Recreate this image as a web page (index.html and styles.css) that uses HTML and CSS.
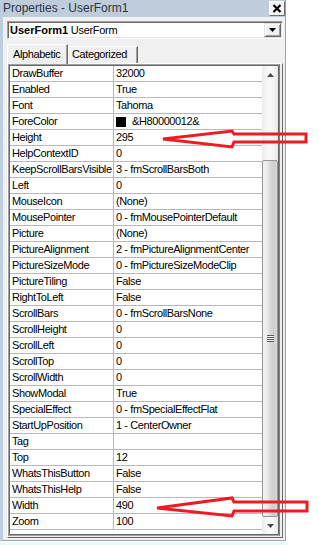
FILE: index.html
```html
<!DOCTYPE html>
<html>
<head>
<meta charset="utf-8">
<link rel="stylesheet" href="styles.css">
</head>
<body>
<div class="screen">
  <div class="window">
    <div class="titlebar">
      <span class="title">Properties - UserForm1</span>
      <span class="close"><svg width="10" height="9" viewBox="0 0 10 9"><path d="M1.5 1 L8.5 8 M8.5 1 L1.5 8" stroke="#000" stroke-width="2.2" fill="none"/></svg></span>
    </div>
    <div class="combo">
      <span class="combo-text"><b>UserForm1</b> UserForm</span>
      <span class="drop"><svg width="7" height="4" viewBox="0 0 7 4"><path d="M0 0 H7 L3.5 4 Z" fill="#000"/></svg></span>
    </div>
    <div class="tabs">
      <div class="tab active">Alphabetic</div>
      <div class="tab">Categorized</div>
    </div>
    <div class="page">
      <div class="grid">
        <div class="rows">
          <div class="row"><span class="name">DrawBuffer</span><span class="val">32000</span></div>
          <div class="row"><span class="name">Enabled</span><span class="val">True</span></div>
          <div class="row"><span class="name">Font</span><span class="val">Tahoma</span></div>
          <div class="row"><span class="name">ForeColor</span><span class="val"><span class="swatch"></span>&amp;H80000012&amp;</span></div>
          <div class="row"><span class="name">Height</span><span class="val">295</span></div>
          <div class="row"><span class="name">HelpContextID</span><span class="val">0</span></div>
          <div class="row"><span class="name">KeepScrollBarsVisible</span><span class="val">3 - fmScrollBarsBoth</span></div>
          <div class="row"><span class="name">Left</span><span class="val">0</span></div>
          <div class="row"><span class="name">MouseIcon</span><span class="val">(None)</span></div>
          <div class="row"><span class="name">MousePointer</span><span class="val">0 - fmMousePointerDefault</span></div>
          <div class="row"><span class="name">Picture</span><span class="val">(None)</span></div>
          <div class="row"><span class="name">PictureAlignment</span><span class="val">2 - fmPictureAlignmentCenter</span></div>
          <div class="row"><span class="name">PictureSizeMode</span><span class="val">0 - fmPictureSizeModeClip</span></div>
          <div class="row"><span class="name">PictureTiling</span><span class="val">False</span></div>
          <div class="row"><span class="name">RightToLeft</span><span class="val">False</span></div>
          <div class="row"><span class="name">ScrollBars</span><span class="val">0 - fmScrollBarsNone</span></div>
          <div class="row"><span class="name">ScrollHeight</span><span class="val">0</span></div>
          <div class="row"><span class="name">ScrollLeft</span><span class="val">0</span></div>
          <div class="row"><span class="name">ScrollTop</span><span class="val">0</span></div>
          <div class="row"><span class="name">ScrollWidth</span><span class="val">0</span></div>
          <div class="row"><span class="name">ShowModal</span><span class="val">True</span></div>
          <div class="row"><span class="name">SpecialEffect</span><span class="val">0 - fmSpecialEffectFlat</span></div>
          <div class="row"><span class="name">StartUpPosition</span><span class="val">1 - CenterOwner</span></div>
          <div class="row"><span class="name">Tag</span><span class="val"></span></div>
          <div class="row"><span class="name">Top</span><span class="val">12</span></div>
          <div class="row"><span class="name">WhatsThisButton</span><span class="val">False</span></div>
          <div class="row"><span class="name">WhatsThisHelp</span><span class="val">False</span></div>
          <div class="row"><span class="name">Width</span><span class="val">490</span></div>
          <div class="row"><span class="name">Zoom</span><span class="val">100</span></div>
        </div>
        <div class="scrollbar">
          <div class="sb-btn"><svg width="7" height="4" viewBox="0 0 7 4"><path d="M0 4 H7 L3.5 0 Z" fill="#4a4a4a"/></svg></div>
          <div class="sb-track"></div>
          <div class="sb-thumb"><span class="grip"></span></div>
          <div class="sb-btn"><svg width="7" height="4" viewBox="0 0 7 4"><path d="M0 0 H7 L3.5 4 Z" fill="#4a4a4a"/></svg></div>
        </div>
      </div>
    </div>
  </div>
  <div class="band"></div>
  <svg class="annot" width="319" height="545" viewBox="0 0 319 545">
    <polygon points="163,139 232,131 234,134 306,134 306,142 234,142 232,147" fill="none" stroke="#ed1c24" stroke-width="3" stroke-linejoin="miter"/>
    <polygon points="157,508 232,498 234,502 307,502 307,511 234,511 232,516" fill="none" stroke="#ed1c24" stroke-width="3" stroke-linejoin="miter"/>
  </svg>
</div>
</body>
</html>
```
FILE: styles.css
```css
body {
  margin: 0;
  background: #fff;
  font-family: "Liberation Sans", Arial, sans-serif;
}
.screen {
  position: relative;
  width: 319px;
  height: 545px;
  overflow: hidden;
}
.window {
  width: 286px;
  height: 541px;
  box-sizing: border-box;
  background: #f0f0f0;
  border-left: 3px solid #bccde1;
  border-right: 1px solid #a0a0a0;
  border-bottom: 1px solid #a0a0a0;
  padding-bottom: 2px;
  display: flex;
  flex-direction: column;
}
.titlebar {
  height: 17px;
  flex: none;
  background: #bfcddb;
  display: flex;
  align-items: center;
  justify-content: space-between;
}
.title {
  font-size: 12px;
  color: #2a3440;
  line-height: 17px;
}
.close {
  width: 16px;
  height: 15px;
  box-sizing: border-box;
  background: #f4f4f4;
  border: 1px solid;
  border-color: #ffffff #6d6d6d #6d6d6d #ffffff;
  display: flex;
  align-items: center;
  justify-content: center;
}
.combo {
  margin: 4px 0 0 4px;
  width: 276px;
  height: 18px;
  flex: none;
  box-sizing: border-box;
  background: #fff;
  border: 1px solid;
  border-color: #a0a0a0 #ffffff #ffffff #a0a0a0;
  padding: 1px;
  box-shadow: inset 1px 1px #696969, inset -1px -1px #e3e3e3;
  display: flex;
  align-items: center;
  justify-content: space-between;
}
.combo-text {
  font-size: 11px;
  color: #000;
  padding-left: 1px;
  letter-spacing: -0.3px;
}
.combo-text b {
  letter-spacing: 0;
}
.drop {
  width: 17px;
  height: 14px;
  box-sizing: border-box;
  background: #f0f0f0;
  border: 1px solid;
  border-color: #e3e3e3 #696969 #696969 #e3e3e3;
  box-shadow: inset 1px 1px #fff, inset -1px -1px #a0a0a0;
  display: flex;
  align-items: center;
  justify-content: center;
}
.tabs {
  margin: 5px 0 0 4px;
  height: 19px;
  flex: none;
  display: flex;
  align-items: flex-end;
}
.tab {
  font-size: 11px;
  letter-spacing: -0.4px;
  color: #000;
  box-sizing: border-box;
  border-top: 1px solid #fff;
  border-left: 1px solid #fff;
  border-right: 1px solid #696969;
  box-shadow: inset -1px 0 #a0a0a0;
  height: 17px;
  width: 70px;
  padding-left: 3px;
  line-height: 15px;
}
.tab.active {
  height: 20px;
  width: 61px;
  margin-bottom: -1px;
  padding-left: 5px;
  line-height: 18px;
  background: #f0f0f0;
  position: relative;
  z-index: 1;
}
.page {
  margin-left: 4px;
  width: 276px;
  flex: none;
  box-sizing: border-box;
  border: 1px solid;
  border-color: #ffffff #696969 #696969 #ffffff;
  padding: 0 2px 1px 0;
}
.grid {
  width: 272px;
  height: 472px;
  box-sizing: border-box;
  border: 1px solid;
  border-color: #a0a0a0 #808080 #a0a0a0 #a0a0a0;
  padding: 1px;
  box-shadow: inset 1px 1px #696969, inset -1px -1px #696969;
  background: #fff;
  display: flex;
}
.rows {
  width: 252px;
  display: flex;
  flex-direction: column;
}
.row {
  height: 16px;
  box-sizing: border-box;
  border-bottom: 1px solid #b8b8b8;
  display: flex;
  font-size: 11px;
  letter-spacing: -0.4px;
  color: #000;
  line-height: 15px;
  white-space: nowrap;
}
.name {
  width: 104px;
  box-sizing: border-box;
  border-right: 1px solid #b8b8b8;
  padding-left: 2px;
  overflow: hidden;
}
.val {
  flex: 1;
  padding-left: 2px;
  display: flex;
  align-items: center;
  overflow: hidden;
}
.swatch {
  width: 10px;
  height: 10px;
  background: #000;
  margin-right: 6px;
  flex: none;
}
.scrollbar {
  width: 16px;
  display: flex;
  flex-direction: column;
  background: linear-gradient(to right, #ececec, #fafafa 50%, #f0f0f0 85%, #e2e2e2);
}
.sb-btn {
  height: 17px;
  flex: none;
  display: flex;
  align-items: center;
  justify-content: center;
}
.sb-track {
  height: 77px;
  flex: none;
}
.sb-thumb {
  height: 357px;
  flex: none;
  box-sizing: border-box;
  border: 1px solid #959595;
  border-radius: 2px;
  background: linear-gradient(to right, #f2f2f2, #e8e8e8 35%, #d6d6d6 55%, #cfcfcf 85%, #dcdcdc);
  display: flex;
  align-items: center;
  justify-content: center;
}
.grip {
  width: 7px;
  height: 7px;
  background: repeating-linear-gradient(to bottom, #5c5c5c 0, #5c5c5c 1px, #f4f4f4 1px, #f4f4f4 2px);
}
.band {
  width: 287px;
  height: 3px;
  margin-top: 1px;
  background: #e1fbff;
}
.annot {
  position: absolute;
  left: 0;
  top: 0;
  pointer-events: none;
}
```
